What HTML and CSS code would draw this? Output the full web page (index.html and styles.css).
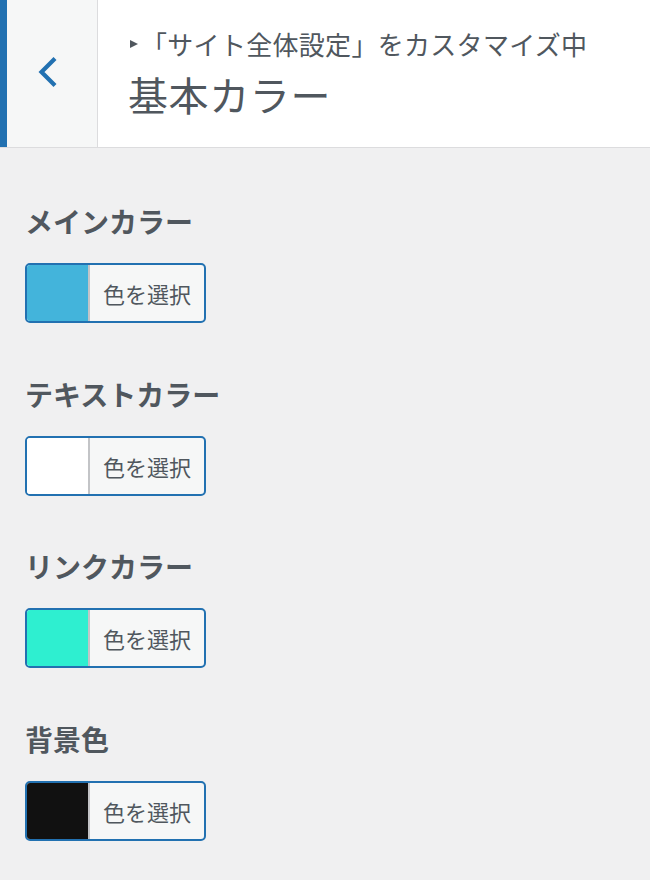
FILE: index.html
```html
<!DOCTYPE html>
<html lang="ja">
<head>
<meta charset="utf-8">
<title>基本カラー</title>
<link rel="stylesheet" href="styles.css">
</head>
<body>
<div class="panel">
  <header class="header">
    <button class="back" type="button" aria-label="戻る">
      <svg class="back-icon" width="90" height="147" viewBox="0 0 90 147">
        <path d="M48 58.5 L34.5 72 L48 85.5" fill="none" stroke="#2271b1" stroke-width="4.2" stroke-linecap="butt" stroke-linejoin="miter"/>
      </svg>
    </button>
    <div class="heading">
      <div class="crumb"><span class="crumb-arrow"></span>「サイト全体設定」をカスタマイズ中</div>
      <h1 class="title">基本カラー</h1>
    </div>
  </header>

  <main class="controls">
    <section class="control">
      <div class="label">メインカラー</div>
      <button class="picker" type="button"><span class="swatch swatch-main"></span><span class="picker-text">色を選択</span></button>
    </section>
    <section class="control">
      <div class="label">テキストカラー</div>
      <button class="picker" type="button"><span class="swatch swatch-text"></span><span class="picker-text">色を選択</span></button>
    </section>
    <section class="control">
      <div class="label">リンクカラー</div>
      <button class="picker" type="button"><span class="swatch swatch-link"></span><span class="picker-text">色を選択</span></button>
    </section>
    <section class="control">
      <div class="label">背景色</div>
      <button class="picker" type="button"><span class="swatch swatch-bg"></span><span class="picker-text">色を選択</span></button>
    </section>
  </main>
</div>
</body>
</html>
```

FILE: styles.css
```css
* {
  box-sizing: border-box;
}

html, body {
  margin: 0;
  padding: 0;
  background: #f0f0f1;
}

body {
  font-family: "Noto Sans CJK JP", "Noto Sans", "Liberation Sans", sans-serif;
  color: #50575e;
  width: 650px;
  height: 880px;
  overflow: hidden;
}

.header {
  display: flex;
  height: 148px;
  background: #ffffff;
  border-bottom: 1px solid #dcdcde;
}

.back {
  flex: 0 0 98px;
  height: 147px;
  padding: 0;
  margin: 0;
  background: #f6f7f7;
  border: none;
  border-left: 7px solid #2271b1;
  border-right: 1px solid #dcdcde;
  display: flex;
  align-items: center;
  justify-content: flex-start;
}

.back-icon {
  display: block;
}

.heading {
  flex: 1;
  padding: 27px 0 0 30px;
}

.crumb {
  font-size: 26px;
  line-height: 34px;
  letter-spacing: 0.3px;
  display: flex;
  align-items: center;
  white-space: nowrap;
}

.crumb-arrow {
  display: inline-block;
  width: 0;
  height: 0;
  border-left: 8px solid #50575e;
  border-top: 4px solid transparent;
  border-bottom: 4px solid transparent;
  margin: 0 3px 0 2px;
}

.title {
  margin: 7px 0 0;
  font-size: 40px;
  line-height: 52px;
  letter-spacing: 0.6px;
  font-weight: 400;
  color: #50575e;
}

.controls {
  padding: 52px 0 0 25px;
}

.control {
  margin-bottom: 49.5px;
}

.label {
  font-size: 28px;
  line-height: 42px;
  font-weight: 700;
  color: #50575e;
  margin-bottom: 21px;
}

.picker {
  display: flex;
  width: 181px;
  height: 60px;
  padding: 0;
  margin: 0;
  border: 2px solid #2271b1;
  border-radius: 5px;
  overflow: hidden;
  background: #f6f7f7;
  font-family: inherit;
}

.swatch {
  flex: 0 0 63px;
  height: 100%;
  border-right: 2px solid #c3c4c7;
}

.swatch-main { background: #43b4db; }
.swatch-text { background: #ffffff; }
.swatch-link { background: #2eefd0; }
.swatch-bg { background: #111111; }

.picker-text {
  flex: 1;
  display: flex;
  align-items: center;
  justify-content: center;
  font-size: 22px;
  color: #50575e;
}
```
